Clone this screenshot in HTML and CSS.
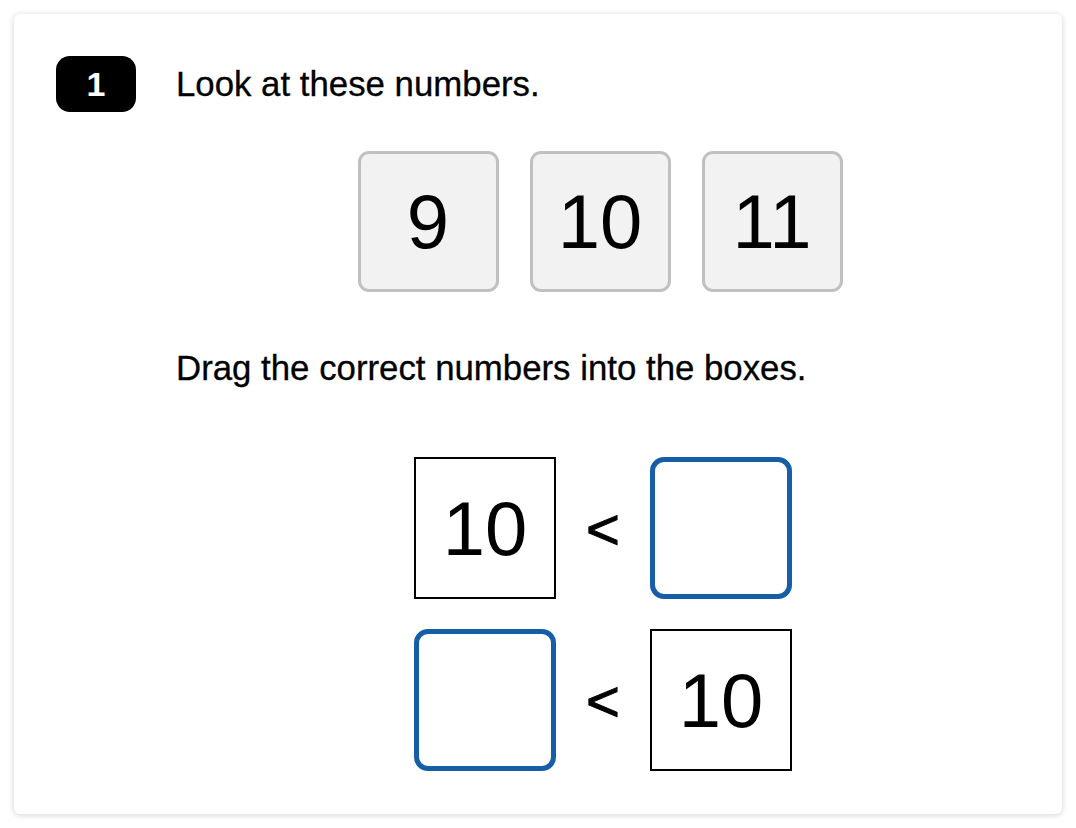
FILE: index.html
```html
<!DOCTYPE html>
<html lang="en">
<head>
<meta charset="utf-8">
<title>Question 1</title>
<link rel="stylesheet" href="styles.css">
</head>
<body>
<div class="card">
  <div class="badge">1</div>
  <div class="content">
    <p class="prompt">Look at these numbers.</p>
    <div class="tiles">
      <div class="tile">9</div>
      <div class="tile">10</div>
      <div class="tile">11</div>
    </div>
    <p class="prompt second">Drag the correct numbers into the boxes.</p>
    <div class="compare">
      <div class="row">
        <div class="box fixed">10</div>
        <div class="lt">&lt;</div>
        <div class="box drop"></div>
      </div>
      <div class="row">
        <div class="box drop"></div>
        <div class="lt">&lt;</div>
        <div class="box fixed">10</div>
      </div>
    </div>
  </div>
</div>
</body>
</html>
```

FILE: styles.css
```css
* { box-sizing: border-box; }
html, body {
  margin: 0;
  padding: 0;
  background: #ffffff;
}
body {
  font-family: "Liberation Sans", Arial, sans-serif;
  color: #000;
  padding: 14px;
}
.card {
  width: 1048px;
  height: 800px;
  background: #fff;
  border-radius: 6px;
  box-shadow: 0 1px 6px rgba(0, 0, 0, 0.18);
  display: flex;
  padding: 42px 38px 42px 42px;
}
.badge {
  flex: 0 0 80px;
  height: 56px;
  background: #000;
  color: #fff;
  border-radius: 14px;
  font-weight: bold;
  font-size: 34px;
  display: flex;
  align-items: center;
  justify-content: center;
}
.content {
  flex: 1;
  margin-left: 40px;
  display: flex;
  flex-direction: column;
}
.prompt {
  margin: 0;
  font-size: 34.8px;
  line-height: 56px;
  -webkit-text-stroke: 0.3px #000;
}
.prompt.second {
  margin-top: 48px;
}
.tiles {
  margin-top: 39px;
  display: flex;
  justify-content: center;
  gap: 31px;
}
.tile {
  width: 141px;
  height: 141px;
  background: #f2f2f2;
  border: 3px solid #c0c0c0;
  border-radius: 11px;
  font-size: 76px;
  display: flex;
  align-items: center;
  justify-content: center;
}
.compare {
  margin-top: 61px;
  padding-left: 6px;
  display: flex;
  flex-direction: column;
  align-items: center;
  gap: 30px;
}
.row {
  display: flex;
  align-items: center;
}
.box {
  width: 142px;
  height: 142px;
  display: flex;
  align-items: center;
  justify-content: center;
  font-size: 76px;
}
.box.fixed {
  border: 2px solid #000;
}
.box.drop {
  border: 5px solid #175ea8;
  border-radius: 14px;
}
.lt {
  width: 94px;
  font-size: 58px;
  -webkit-text-stroke: 1px #000;
  display: flex;
  align-items: center;
  justify-content: center;
}
```
